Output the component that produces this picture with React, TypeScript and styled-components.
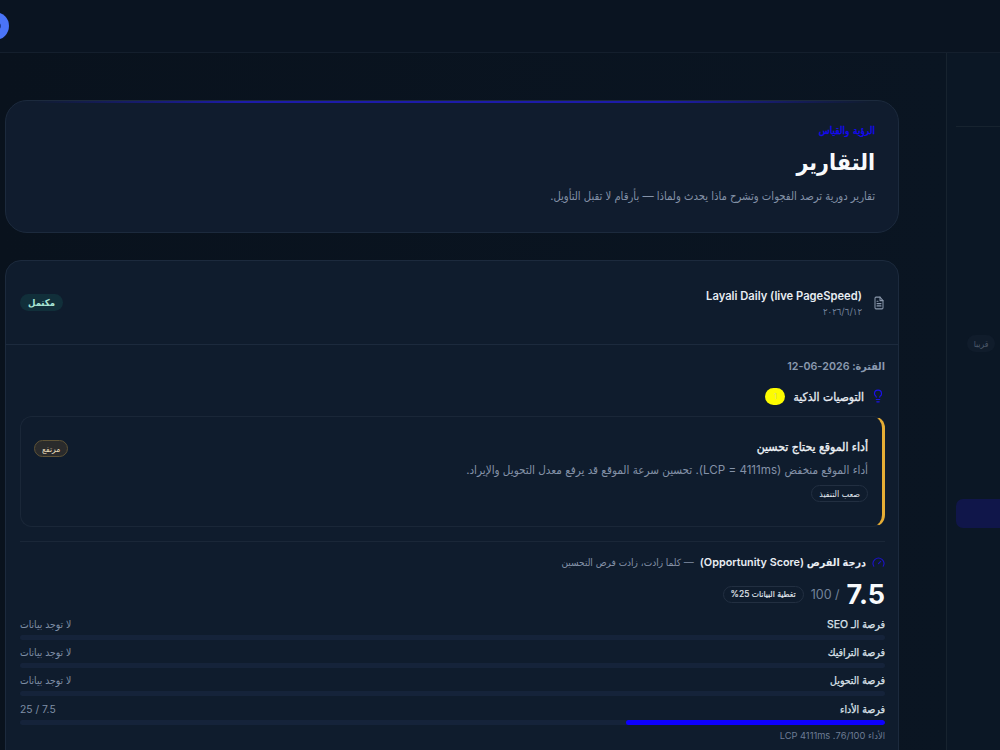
import React from "react";
import styled, { createGlobalStyle } from "styled-components";

const Global = createGlobalStyle`
  html, body { margin: 0; padding: 0; height: 100%; overflow: hidden; background: #0a131f; }
  body { font-family: "Inter", "DejaVu Sans Condensed", "DejaVu Sans", sans-serif; font-stretch: condensed; }
  * { box-sizing: border-box; }
`;
const Page = styled.div`
  width: 1000px; height: 750px; overflow: hidden; display: flex; flex-direction: column; background: #0a131f; color: #f1f5f9;
`;
const TopBar = styled.header`
  height: 53px; flex: none; border-bottom: 1px solid #141f2d; background: #0a1421; display: flex; align-items: center; justify-content: flex-start;
`;
const Avatar = styled.div`
  width: 28px; height: 28px; border-radius: 50%; background: #4a74f8; margin-left: -19px; flex: none; display: flex; align-items: center; justify-content: flex-end; padding-right: 8px;
`;
const Dot = styled.span`
  width: 6px; height: 6px; border-radius: 50%; background: #1e3a8a;
`;
const Body = styled.div`
  flex: 1; display: flex; flex-direction: row; min-height: 0; overflow: hidden;
`;
const Main = styled.main`
  width: 946px; flex: none; padding: 47px 47px 0 5px; direction: rtl; background: linear-gradient(90deg, #09121d, #0a1522);
  display: flex; flex-direction: column; gap: 27px;
`;
const Side = styled.aside`
  width: 54px; flex: none; border-left: 1px solid #17232f; background: #0b1725; position: relative; display: flex; flex-direction: column; padding: 73px 0 0 9px;
`;
const SideDivider = styled.div`
  height: 1px; background: #17232f; margin-bottom: 208px;
`;
const SoonBadge = styled.span`
  align-self: flex-start; margin-left: 11px; width: 28px; height: 17px; border-radius: 9px; background: #101c2b; color: #4d5a6b; font-size: 8.5px; display: flex; align-items: center; justify-content: center;
`;
const SideActive = styled.div`
  height: 29px; margin-top: 147px; border-radius: 7px 0 0 7px; background: #10164a;
`;
const HeroCard = styled.section`
  height: 133px; flex: none; position: relative; border-radius: 22px; background: #101c2e; border: 1px solid #1c2a3d; padding: 22px 23px 0; overflow: hidden;
  &::before { content: ""; position: absolute; top: 0; left: 3%; right: 3%; height: 1.5px; background: linear-gradient(90deg, transparent, #1d1ba8 25%, #1d1ba8 75%, transparent); }
`;
const Eyebrow = styled.div`
  font-size: 10px; -webkit-text-stroke: 0.35px #1408f5; word-spacing: 1px; color: #1408f5; line-height: 14px;
`;
const Title = styled.h1`
  margin: 6px 0 0; font-size: 23px; font-weight: 700; line-height: 38px; color: #f8fafc;
`;
const Subtitle = styled.p`
  margin: 6px 0 0; font-size: 11.2px; line-height: 18px; color: #8492a8;
`;
const ReportCard = styled.section`
  flex: none; height: 560px; border-radius: 16px 16px 0 0; background: #0f1c2d; border: 1px solid #1c2a3d;
`;
const ReportHead = styled.div`
  height: 84px; display: flex; align-items: center; justify-content: space-between; padding: 0 13px 0 14px; border-bottom: 1px solid #1c2a3d;
`;
const ReportId = styled.div`
  display: flex; align-items: center; gap: 11px;
`;
const ReportText = styled.div`
  display: flex; flex-direction: column; gap: 1px;
`;
const ReportName = styled.div`
  font-size: 11.2px; font-weight: 600; line-height: 16px; color: #e8edf3; direction: ltr; text-align: right;
`;
const ReportDate = styled.div`
  font-size: 9.5px; line-height: 13px; color: #71819a;
`;
const StatusPill = styled.span`
  height: 17px; padding: 0 8px; border-radius: 9px; background: #112f3a; color: #a7e3d4; font-size: 9.5px; font-weight: 600; display: flex; align-items: center;
`;
const ReportBody = styled.div`
  padding: 14px 13px 0 14px; display: flex; flex-direction: column;
`;
const Period = styled.div`
  font-size: 10.7px; font-weight: 600; line-height: 16px; color: #8a99af;
`;
const RecHead = styled.div`
  margin-top: 12px; display: flex; align-items: center; gap: 6px; height: 18px;
`;
const RecTitle = styled.span`
  font-size: 12px; -webkit-text-stroke: 0.3px #e8edf3; color: #e8edf3; margin-right: 1px;
`;
const CountBadge = styled.span`
  width: 20px; height: 17px; border-radius: 9px; background: #fdfc00; color: #d9d870; font-size: 8px; display: flex; align-items: center; justify-content: center; margin-right: 2px;
`;
const RecCard = styled.article`
  margin-top: 11px; height: 111px; border: 1px solid #1a2738; border-right: 3px solid #e6ad35; border-radius: 12px; padding: 21px 14px 0; position: relative;
`;
const RecName = styled.div`
  font-size: 12.2px; -webkit-text-stroke: 0.35px #eef2f6; line-height: 18px; color: #eef2f6;
`;
const RecDesc = styled.div`
  margin-top: 5px; font-size: 11.6px; line-height: 18px; color: #8492a8;
`;
const EffortPill = styled.span`
  margin-top: 6px; display: inline-flex; align-items: center; height: 17px; padding: 0 7px; border-radius: 9px; border: 1px solid #222f41; color: #e2e8f0; font-size: 8.8px;
`;
const PriorityPill = styled.span`
  position: absolute; left: 13px; top: 23px; height: 17px; padding: 0 7px; border-radius: 9px; border: 1px solid #5d5236; background: #2a2b2c; color: #e8dcbc; font-size: 8.5px; display: flex; align-items: center;
`;
const Divider = styled.div`
  height: 1px; background: #1a2738; margin-top: 14px;
`;
const ScoreHead = styled.div`
  margin-top: 11px; display: flex; align-items: center; gap: 6px; height: 18px;
`;
const ScoreTitle = styled.span`
  font-size: 10.8px; font-weight: 600; color: #e8edf3;
`;
const ScoreNote = styled.span`
  font-size: 10px; color: #8492a8;
`;
const ScoreRow = styled.div`
  margin-top: 9px; display: flex; align-items: center; gap: 7px; height: 28px;
`;
const ScoreValue = styled.span`
  font-size: 27px; font-weight: 700; color: #f8fafc;
`;
const ScoreMax = styled.span`
  font-size: 12.5px; color: #72839b;
`;
const CoveragePill = styled.span`
  height: 17px; padding: 0 7px; border-radius: 9px; border: 1px solid #222f41; font-size: 8.5px; color: #e2e8f0; -webkit-text-stroke: 0.15px #e2e8f0; display: flex; align-items: center;
`;
const Metric = styled.div`
  margin-top: ${(p: { $first?: boolean }) => (p.$first ? "4px" : "0")}; height: 28px; display: flex; flex-direction: column; justify-content: flex-end;
`;
const LastMetric = styled(Metric)`
  margin-top: 1px;
`;
const MetricHead = styled.div`
  display: flex; justify-content: space-between; align-items: center; height: 18px; margin-bottom: 2px;
`;
const MetricName = styled.span`
  font-size: 10.5px; color: #dbe2ea; -webkit-text-stroke: 0.25px #dbe2ea;
`;
const MetricValue = styled.span`
  font-size: 10.3px; color: #7f8fa6;
`;
const Track = styled.div`
  height: 5px; border-radius: 3px; background: #15233a; overflow: hidden;
`;
const Fill = styled.div`
  height: 100%; border-radius: 3px; background: #0d00ff;
`;
const MetricNote = styled.div`
  margin-top: 5px; font-size: 9.3px; color: #6d7d95;
`;

const DocIcon = () => (
  <svg width="12" height="14" viewBox="0 0 24 24" fill="none" stroke="#8c99ad" strokeWidth="2" strokeLinecap="round" strokeLinejoin="round" preserveAspectRatio="none">
    <path d="M14 2H6a2 2 0 0 0-2 2v16a2 2 0 0 0 2 2h12a2 2 0 0 0 2-2V8z" />
    <path d="M14 2v6h6" /><path d="M16 13H8" /><path d="M16 17H8" /><path d="M10 9H8" />
  </svg>
);
const BulbIcon = () => (
  <svg width="14" height="14" viewBox="0 0 24 24" fill="none" stroke="#1c12e8" strokeWidth="2" strokeLinecap="round" strokeLinejoin="round">
    <path d="M15 14c.2-1 .7-1.700 1.500-2.500 1-.9 1.500-2.200 1.500-3.500A6 6 0 0 0 6 8c0 1 .2 2.200 1.500 3.500.7.7 1.300 1.500 1.500 2.500" />
    <path d="M9 18h6" /><path d="M10 22h4" />
  </svg>
);
const GaugeIcon = () => (
  <svg width="13" height="13" viewBox="0 0 24 24" fill="none" stroke="#1c12c8" strokeWidth="2" strokeLinecap="round" strokeLinejoin="round">
    <path d="m12 14 4-4" /><path d="M3.340 19a10 10 0 1 1 17.320 0" />
  </svg>
);

const metrics = [
  { name: "فرصة الـ SEO", value: "لا توجد بيانات" },
  { name: "فرصة الترافيك", value: "لا توجد بيانات" },
  { name: "فرصة التحويل", value: "لا توجد بيانات" },
];

export default function App() {
  return (
    <Page>
      <Global />
      <TopBar>
        <Avatar><Dot /></Avatar>
      </TopBar>
      <Body>
        <Main>
          <HeroCard>
            <Eyebrow>الرؤية والقياس</Eyebrow>
            <Title>التقارير</Title>
            <Subtitle>تقارير دورية ترصد الفجوات وتشرح ماذا يحدث ولماذا — بأرقام لا تقبل التأويل.</Subtitle>
          </HeroCard>
          <ReportCard>
            <ReportHead>
              <ReportId>
                <DocIcon />
                <ReportText>
                  <ReportName>Layali Daily (live PageSpeed)</ReportName>
                  <ReportDate>٢٠٢٦/٦/١٢</ReportDate>
                </ReportText>
              </ReportId>
              <StatusPill>مكتمل</StatusPill>
            </ReportHead>
            <ReportBody>
              <Period>الفترة: 2026-06-12</Period>
              <RecHead>
                <BulbIcon />
                <RecTitle>التوصيات الذكية</RecTitle>
                <CountBadge>1</CountBadge>
              </RecHead>
              <RecCard>
                <RecName>أداء الموقع يحتاج تحسين</RecName>
                <RecDesc>أداء الموقع منخفض (LCP = 4111ms). تحسين سرعة الموقع قد يرفع معدل التحويل والإيراد.</RecDesc>
                <EffortPill>صعب التنفيذ</EffortPill>
                <PriorityPill>مرتفع</PriorityPill>
              </RecCard>
              <Divider />
              <ScoreHead>
                <GaugeIcon />
                <ScoreTitle>درجة الفرص (Opportunity Score)</ScoreTitle>
                <ScoreNote>— كلما زادت، زادت فرص التحسين</ScoreNote>
              </ScoreHead>
              <ScoreRow>
                <ScoreValue>7.5</ScoreValue>
                <ScoreMax>/ 100</ScoreMax>
                <CoveragePill>تغطية البيانات 25%</CoveragePill>
              </ScoreRow>
              {metrics.map((m, i) => (
                <Metric key={m.name} $first={i === 0}>
                  <MetricHead>
                    <MetricName>{m.name}</MetricName>
                    <MetricValue>{m.value}</MetricValue>
                  </MetricHead>
                  <Track />
                </Metric>
              ))}
              <LastMetric>
                <MetricHead>
                  <MetricName>فرصة الأداء</MetricName>
                  <MetricValue>7.5 / 25</MetricValue>
                </MetricHead>
                <Track><Fill style={{ width: `${(7.5 / 25) * 100}%` }} /></Track>
              </LastMetric>
              <MetricNote>الأداء 76/100. LCP 4111ms</MetricNote>
            </ReportBody>
          </ReportCard>
        </Main>
        <Side>
          <SideDivider />
          <SoonBadge>قريبا</SoonBadge>
          <SideActive />
        </Side>
      </Body>
    </Page>
  );
}
